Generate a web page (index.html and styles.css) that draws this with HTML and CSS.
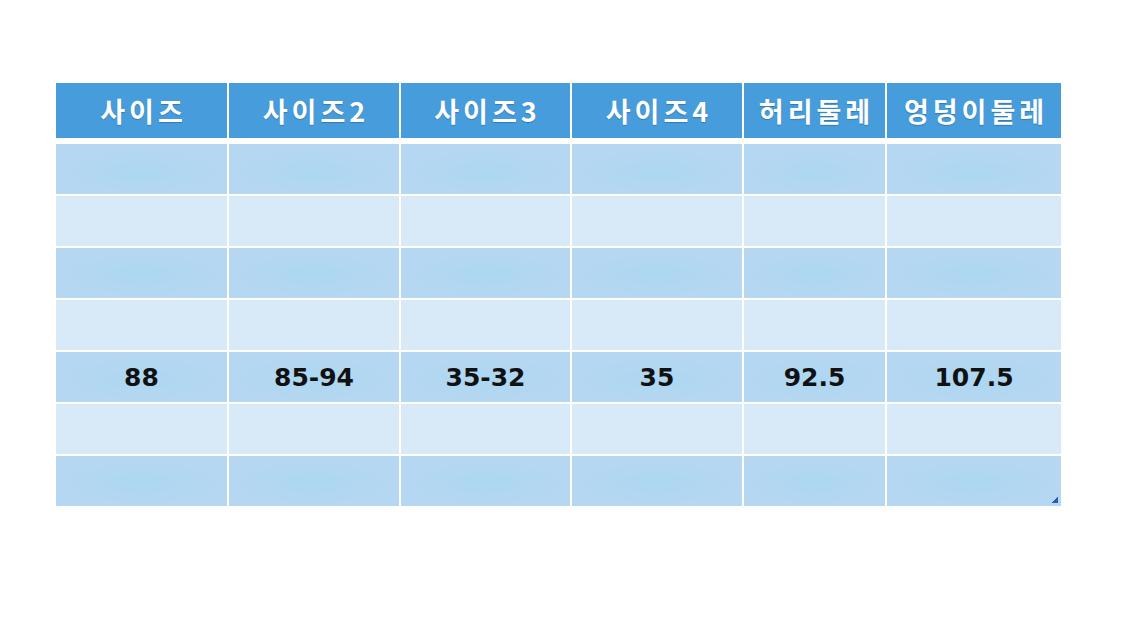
FILE: index.html
```html
<!DOCTYPE html>
<html lang="ko">
<head>
<meta charset="utf-8">
<title>사이즈표</title>
<link rel="stylesheet" href="styles.css">
</head>
<body>
<div class="page">
  <div class="sizetable">
    <div class="grid head">
      <div class="hcell">사이즈</div>
      <div class="hcell">사이즈2</div>
      <div class="hcell">사이즈3</div>
      <div class="hcell">사이즈4</div>
      <div class="hcell">허리둘레</div>
      <div class="hcell">엉덩이둘레</div>
    </div>
    <div class="grid body">
      <div class="cell dark"></div><div class="cell dark"></div><div class="cell dark"></div><div class="cell dark"></div><div class="cell dark"></div><div class="cell dark"></div>
      <div class="cell light"></div><div class="cell light"></div><div class="cell light"></div><div class="cell light"></div><div class="cell light"></div><div class="cell light"></div>
      <div class="cell dark"></div><div class="cell dark"></div><div class="cell dark"></div><div class="cell dark"></div><div class="cell dark"></div><div class="cell dark"></div>
      <div class="cell light"></div><div class="cell light"></div><div class="cell light"></div><div class="cell light"></div><div class="cell light"></div><div class="cell light"></div>
      <div class="cell dark">88</div><div class="cell dark">85-94</div><div class="cell dark">35-32</div><div class="cell dark">35</div><div class="cell dark">92.5</div><div class="cell dark">107.5</div>
      <div class="cell light"></div><div class="cell light"></div><div class="cell light"></div><div class="cell light"></div><div class="cell light"></div><div class="cell light"></div>
      <div class="cell dark"></div><div class="cell dark"></div><div class="cell dark"></div><div class="cell dark"></div><div class="cell dark"></div><div class="cell dark last"><span class="handle"></span></div>
    </div>
  </div>
</div>
</body>
</html>
```

FILE: styles.css
```css
html, body {
  margin: 0;
  padding: 0;
  background: #ffffff;
}

.page {
  width: 1125px;
  height: 625px;
  padding: 83px 0 0 56px;
  box-sizing: border-box;
  font-family: "Noto Sans CJK KR", "Noto Sans", sans-serif;
}

.sizetable {
  width: 1005px;
  display: flex;
  flex-direction: column;
  gap: 6px;
}

.grid {
  display: grid;
  grid-template-columns: 171px 170px 169px 170px 141px 174px;
  column-gap: 2px;
}

.head {
  grid-template-rows: 55px;
}

.body {
  grid-template-rows: repeat(7, 50px);
  row-gap: 2px;
}

.hcell {
  background: #479ddb;
  color: #ffffff;
  font-weight: 700;
  font-size: 27px;
  letter-spacing: 4px;
  text-indent: 4px;
  display: flex;
  align-items: center;
  justify-content: center;
  text-shadow: 0 1px 1px rgba(20, 60, 110, 0.35);
}

.cell {
  display: flex;
  align-items: center;
  justify-content: center;
  color: #111111;
  font-family: "DejaVu Sans", "Noto Sans", sans-serif;
  font-weight: 700;
  font-size: 25px;
}

.dark {
  background: radial-gradient(ellipse 45% 40% at 50% 55%, #acd7f2 0%, #b5d7f1 100%);
}

.light {
  background: #d8eaf7;
}

.last {
  position: relative;
}

.handle {
  position: absolute;
  right: 3px;
  bottom: 3px;
  width: 6px;
  height: 6px;
  background: linear-gradient(135deg, transparent 50%, #2a5fb3 50%);
}
```
